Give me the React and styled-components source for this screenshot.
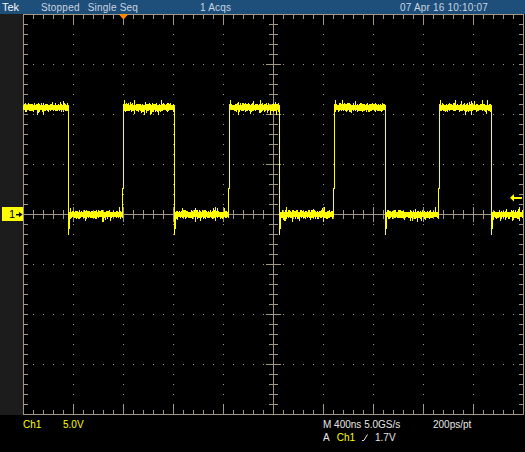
import React from 'react';
import styled, { createGlobalStyle } from 'styled-components';

const GlobalStyle = createGlobalStyle`
  html, body {
    margin: 0;
    padding: 0;
    background: #000;
  }
  body {
    font-family: "Liberation Sans", Arial, sans-serif;
  }
`;

// screen geometry, in page pixels
const LEFT = 23;
const RIGHT = 523;
const TOP = 14;
const BOTTOM = 414;
const DIV = 50;
const MINOR = 10;
const CX = 273;
const CY = 214;

// trace levels (rows of the bright core) and edge positions
const HIGH = [105, 110];
const LOW = [212, 217];
const FALLS = [68, 174, 279, 385, 491];
const RISES = [123, 229, 334, 439];

const YELLOW = '#ffff00';
const GRID = '#a39682';

function graticulePath() {
  let d = '';
  const v = (x, y1, y2) => { d += `M${x + 0.5} ${y1}V${y2}`; };
  const h = (y, x1, x2) => { d += `M${x1} ${y + 0.5}H${x2}`; };

  v(LEFT, TOP, BOTTOM + 1);
  v(RIGHT, TOP, BOTTOM + 1);
  h(TOP, LEFT, RIGHT + 1);
  h(BOTTOM, LEFT, RIGHT + 1);
  v(CX, TOP, BOTTOM);
  h(CY, LEFT, RIGHT);

  for (let x = LEFT + MINOR; x < RIGHT; x += MINOR) {
    const major = (x - LEFT) % DIV === 0;
    const len = major ? 11 : 5;
    v(x, TOP, TOP + len);
    v(x, BOTTOM + 1 - len, BOTTOM + 1);
    const c = major ? 7 : 4;
    v(x, CY - c, CY + c + 1);
  }
  for (let y = TOP + MINOR; y < BOTTOM; y += MINOR) {
    const major = (y - TOP) % DIV === 0;
    h(y, LEFT, LEFT + 5);
    h(y, RIGHT - 4, RIGHT + 1);
    const c = major ? 7 : 4;
    h(y, CX - c, CX + c + 1);
  }
  return d;
}

function dotPath() {
  let d = '';
  const dot = (x, y) => { d += `M${x} ${y}h1v1h-1z`; };
  for (let x = LEFT + DIV; x < RIGHT; x += DIV) {
    if (x === CX) continue;
    for (let y = TOP + MINOR; y < BOTTOM; y += MINOR) if (y !== CY) dot(x, y);
  }
  for (let y = TOP + DIV; y < BOTTOM; y += DIV) {
    if (y === CY) continue;
    for (let x = LEFT + MINOR; x < RIGHT; x += MINOR) if (x !== CX) dot(x, y);
  }
  return d;
}

function rng(seed) {
  let s = seed;
  return () => {
    s = (s * 1664525 + 1013904223) >>> 0;
    return s / 4294967296;
  };
}

function tracePath() {
  const r = rng(11);
  const bump = () => {
    const v = r();
    if (v < 0.35) return 0;
    if (v < 0.7) return 1;
    if (v < 0.92) return 2;
    return 3 + Math.floor(r() * 3);
  };
  let d = '';
  const col = (x, y1, y2) => { d += `M${x} ${y1}h1V${y2}h-1z`; };
  const band = (x1, x2, [t, b]) => {
    for (let x = x1; x <= x2; x++) col(x, t - bump(), b + bump());
  };

  const edges = [
    ...FALLS.map((x) => ({ x, fall: true })),
    ...RISES.map((x) => ({ x, fall: false })),
  ].sort((a, b) => a.x - b.x);

  let level = HIGH;
  let start = LEFT;
  edges.forEach(({ x, fall }) => {
    if (fall) {
      band(start, x - 1, HIGH);
      col(x, HIGH[0], 235);
      col(x + 1, LOW[0], 229);
      start = x + 2;
      level = LOW;
    } else {
      band(start, x - 1, LOW);
      col(x - 1, 188, LOW[1]);
      col(x, HIGH[0] - 1, 189);
      col(x + 1, 100, HIGH[1]);
      start = x + 1;
      level = HIGH;
    }
  });
  band(start, RIGHT - 1, level);
  return d;
}

const GRID_D = graticulePath();
const DOTS_D = dotPath();
const TRACE_D = tracePath();

function Graticule() {
  return (
    <svg width="502" height="401" viewBox={`${LEFT} ${TOP} 502 401`} shapeRendering="crispEdges" style={{ display: 'block' }}>
      <path d={DOTS_D} fill="#9a9a9a" />
      <path d={GRID_D} stroke={GRID} strokeWidth="1" fill="none" />
      <path d={TRACE_D} fill={YELLOW} />
      {/* trigger position */}
      <polygon points="118.5,14 128.5,14 123.5,19.5" fill="#ff8a00" shapeRendering="auto" />
      {/* trigger level */}
      <polygon points="510,197.8 514,194 514,201.5" fill={YELLOW} shapeRendering="auto" />
      <rect x="514" y="197" width="8" height="2" fill={YELLOW} />
    </svg>
  );
}

function App() {
  return (
    <>
      <GlobalStyle />
      <Screen>
        <StatusBar>
          <Brand>Tek</Brand>
          <State>
            <span>Stopped</span>
            <span>Single Seq</span>
          </State>
          <Status>1 Acqs</Status>
          <Status>07 Apr 16 10:10:07</Status>
        </StatusBar>

        <Display>
          <SidePanel>
            <ChannelMarker>
              <span>1</span>
              <svg width="7" height="7" viewBox="0 0 7 7">
                <rect x="0" y="3" width="4" height="1.4" fill="#000" />
                <polygon points="3,0.6 3,6.4 6.6,3.5" fill="#000" />
              </svg>
            </ChannelMarker>
          </SidePanel>
          <Graticule />
        </Display>

        <Readouts>
          <Readout $channel>Ch1</Readout>
          <Readout $channel>5.0V</Readout>
          <Readout>M 400ns 5.0GS/s</Readout>
          <Readout>200ps/pt</Readout>
          <TriggerReadout>
            <span>A</span>
            <Readout $channel>Ch1</Readout>
            <svg width="6" height="7" viewBox="0 0 6 7">
              <path d="M0 6.5H1.8L5.5 0.5" stroke="#e6e6e6" strokeWidth="1" fill="none" />
            </svg>
            <span>1.7V</span>
          </TriggerReadout>
        </Readouts>
      </Screen>
    </>
  );
}

const Screen = styled.div`
  width: 525px;
  height: 452px;
  overflow: hidden;
  background: #000;
  display: flex;
  flex-direction: column;
`;

const StatusBar = styled.div`
  height: 14px;
  box-sizing: border-box;
  padding: 1px 0 0 2px;
  background: #1e4e7a;
  display: grid;
  grid-template-columns: 39px 159px 200px auto;
  align-items: start;
  font-size: 10px;
  line-height: 13px;
  letter-spacing: 0.2px;
  color: #c9d5e1;
  white-space: nowrap;
`;

const Brand = styled.span`
  font-size: 11px;
  letter-spacing: 0;
  color: #f4f6f8;
  line-height: 12px;
`;

const State = styled.span`
  display: flex;
  gap: 8px;
`;

const Status = styled.span``;

const Display = styled.div`
  display: flex;
  height: 401px;
`;

const SidePanel = styled.div`
  position: relative;
  width: 23px;
  flex: none;
  background: #1c1c1c;
`;

const ChannelMarker = styled.div`
  position: absolute;
  top: 193px;
  left: 2px;
  width: 21px;
  height: 14px;
  box-sizing: border-box;
  padding-left: 7px;
  background: ${YELLOW};
  display: flex;
  align-items: center;
  gap: 1px;
  font-size: 11px;
  line-height: 14px;
  color: #000;
`;

const Readouts = styled.div`
  display: grid;
  grid-template-columns: 40px 260px 110px 1fr;
  grid-auto-rows: 13px;
  padding: 3px 0 0 23px;
  font-size: 10px;
  line-height: 13px;
  color: #e6e6e6;
  white-space: nowrap;
`;

const Readout = styled.span`
  color: ${(p) => (p.$channel ? YELLOW : '#e6e6e6')};
`;

const TriggerReadout = styled.div`
  grid-column: 3 / span 2;
  display: flex;
  align-items: center;
  gap: 7px;
`;

export default App;
